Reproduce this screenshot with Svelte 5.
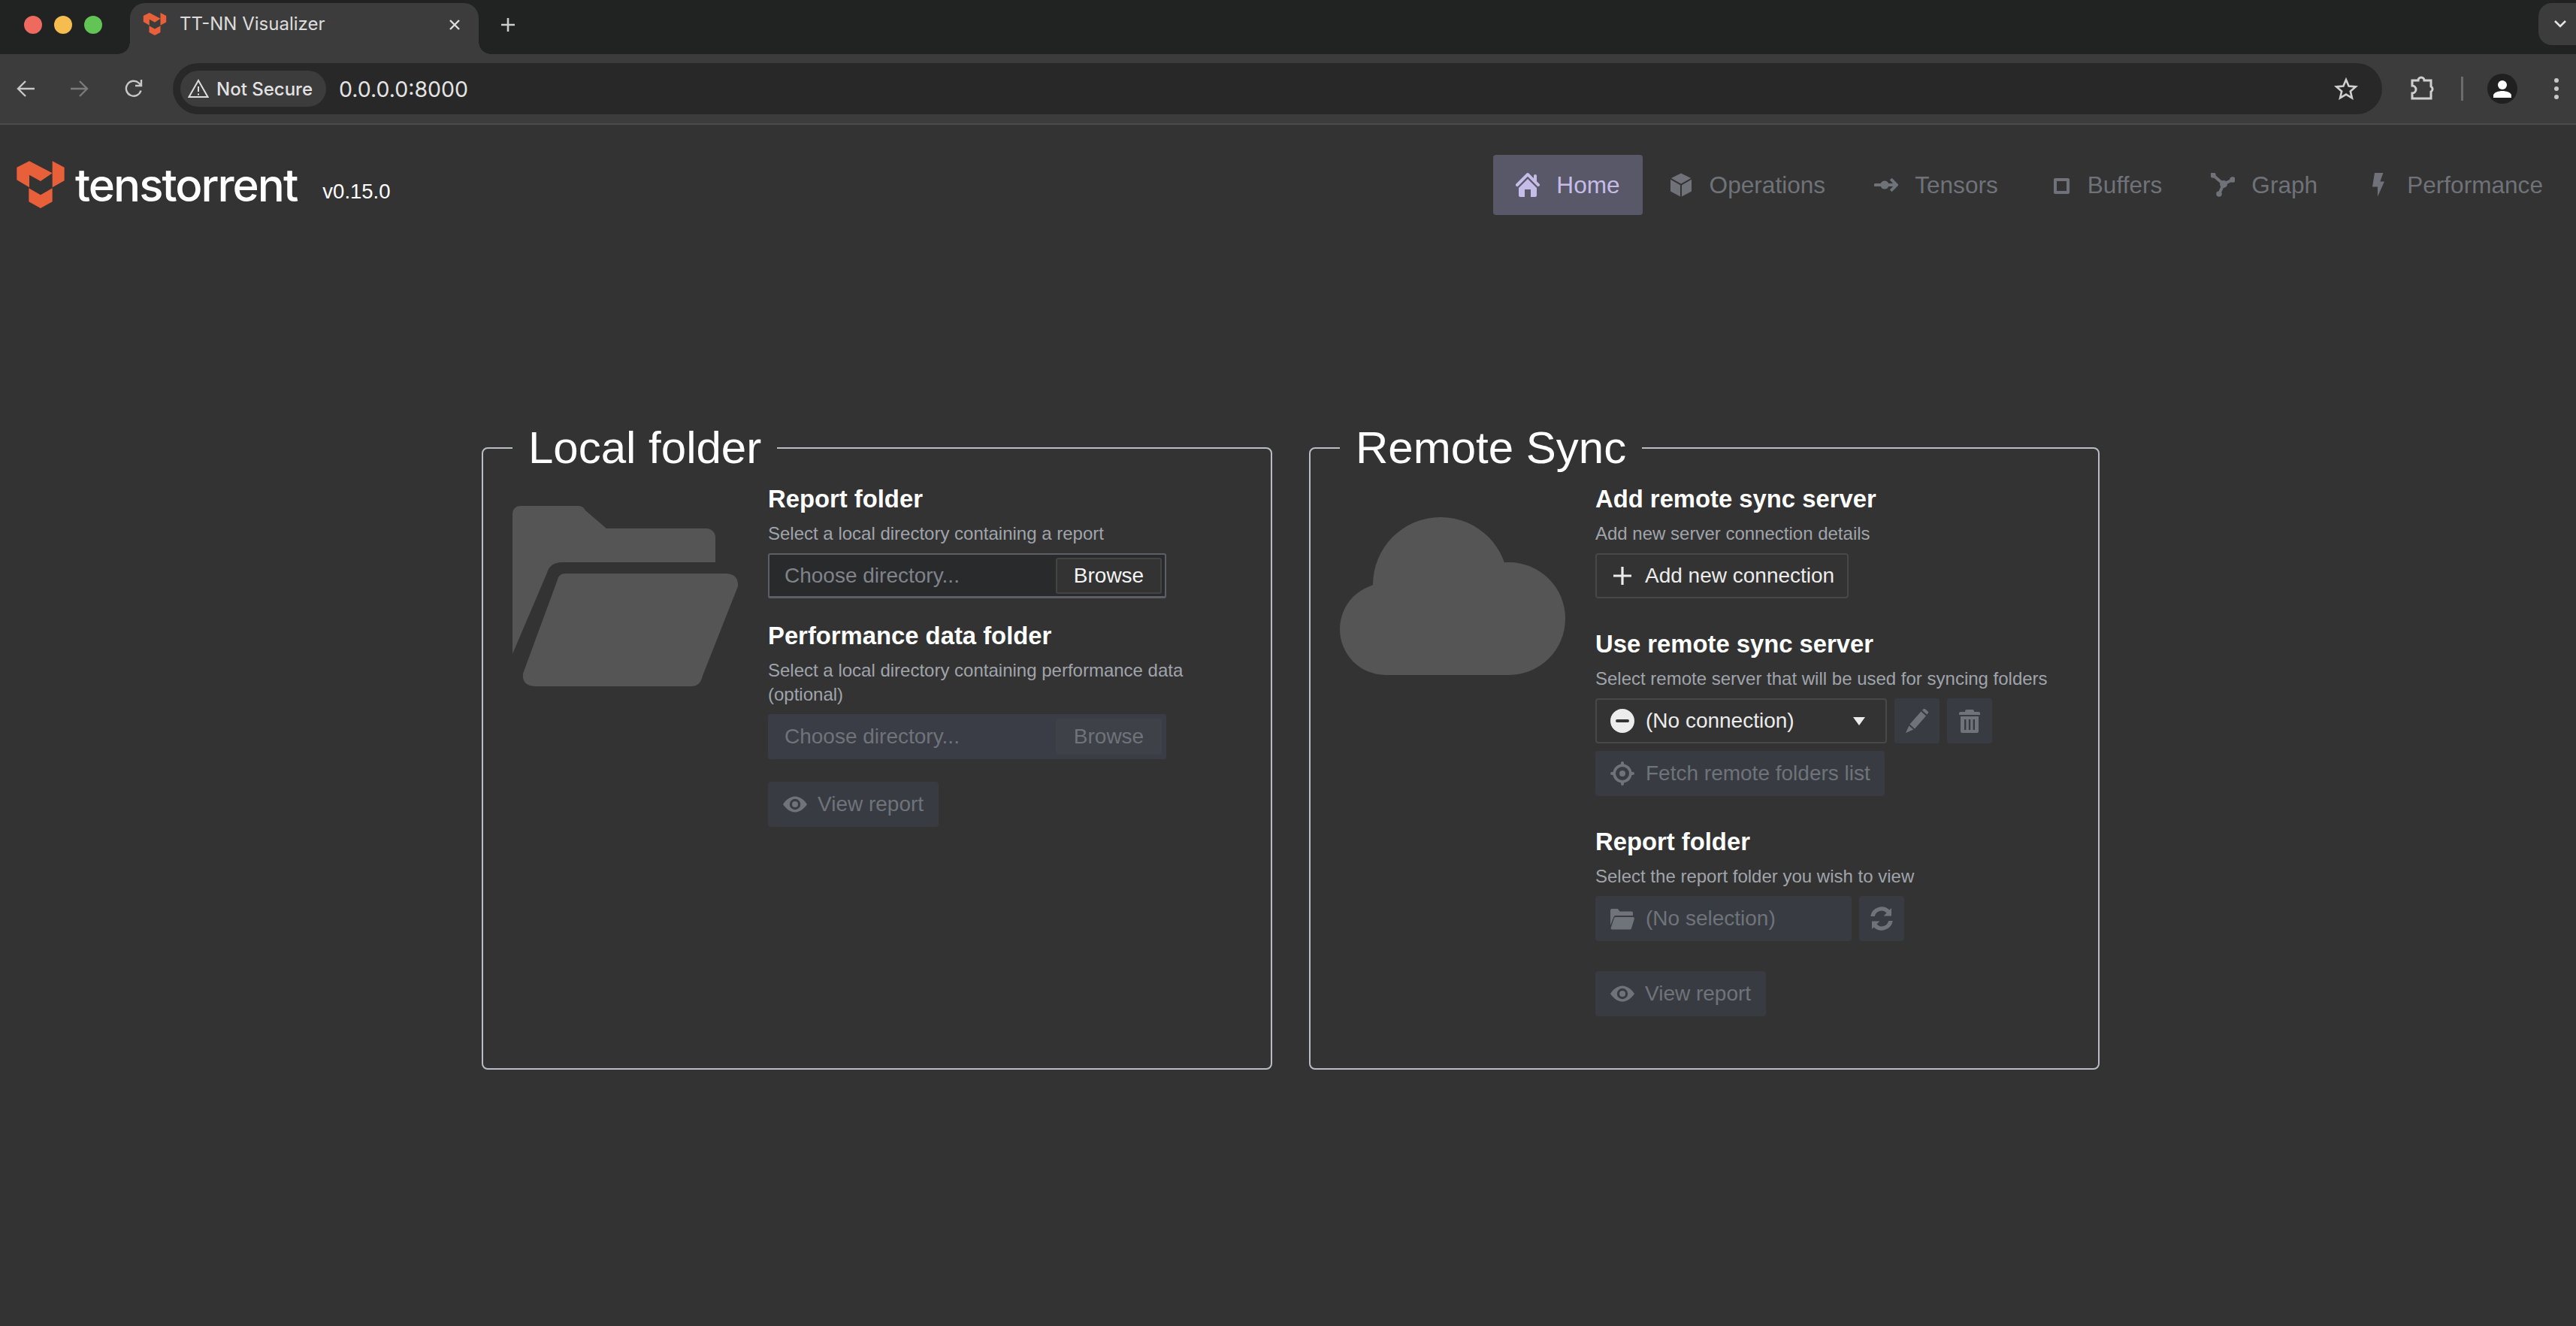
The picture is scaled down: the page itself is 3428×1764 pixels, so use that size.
<script lang="ts">
	const NAV = [
		{
			label: 'Home',
			active: true,
			d: 'M2 10v5c0 .55.45 1 1 1h3v-5h4v5h3c.55 0 1-.45 1-1v-5L8 4l-6 6zm13.71-2.71L14 5.59V2c0-.55-.45-1-1-1s-1 .45-1 1v1.59L8.71.29C8.53.11 8.28 0 8 0s-.53.11-.71.29l-7 7a1.003 1.003 0 001.42 1.42L8 2.41l6.29 6.29c.18.19.43.3.71.3a1.003 1.003 0 00.71-1.71z'
		},
		{
			label: 'Operations',
			d: 'M14.6 3.5 8 .2 1.4 3.5 8 7.2l6.6-3.7zM1 4.4v7.9l6.5 3.5V8.1L1 4.4zm7.500 3.700v7.700l6.500-3.500V4.400L8.500 8.100z'
		},
		{
			label: 'Tensors',
			d: 'M.8 7h3.6a2.8 2.8 0 0 1 5.2 0h3l-2.2-2.2 1.4-1.4L16.4 8l-4.6 4.6-1.4-1.4L12.6 9h-3a2.8 2.8 0 0 1-5.2 0H.8a1 1 0 0 1 0-2z'
		},
		{ label: 'Buffers', d: 'M5.500 3.500h8.500a1 1 0 0 1 1 1V13a1 1 0 0 1-1 1H5.500a1 1 0 0 1-1-1V4.500a1 1 0 0 1 1-1zm1 2v6.500h6.500V5.500z' },
		{
			label: 'Graph',
			line: true,
			d: 'M1.5 1.5L8.5 7.5M8.5 7.5L14.5 4.5M8.5 7.5L5.5 14M0.6 1.5a.9.9 0 1 0 1.8 0a.9.9 0 1 0-1.8 0M7 7.5a1.5 1.5 0 1 0 3 0a1.5 1.5 0 1 0-3 0M13.6 4.5a.9.9 0 1 0 1.8 0a.9.9 0 1 0-1.8 0M4.6 14a.9.9 0 1 0 1.8 0a.9.9 0 1 0-1.8 0'
		},
		{ label: 'Performance', d: 'M5.5 0h5.7L9.2 5.8H12L7.5 15.8V9.2H4z' }
	];

	const EYE =
		'M8 2.8C4.6 2.8 1.7 5.4 0 8c1.7 2.6 4.6 5.2 8 5.2s6.3-2.6 8-5.2c-1.7-2.6-4.6-5.2-8-5.2zm0 1.6a3.6 3.6 0 1 1 0 7.2 3.6 3.6 0 0 1 0-7.2zM8 6a2 2 0 1 0 0 4 2 2 0 0 0 0-4z';
</script>

{#snippet mark(size, box)}
	<svg class="mark" width={size} height={size} viewBox={box} aria-hidden="true">
		<path d="M25 50 75 25l92 48-47 32-45-25v50l-50-30z" />
		<path d="M167 25l48 25v53l-48 27z" />
		<path d="M73 133l47 27 47-27v54l-47 26-47-26z" />
	</svg>
{/snippet}

{#snippet viewReport()}
	<button class="btn off view" disabled>
		<svg class="ico" viewBox="0 0 16 16"><path fill-rule="evenodd" d={EYE} /></svg>
		View report
	</button>
{/snippet}

{#snippet fileInput(off)}
	<label class="file" class:off>
		<span class="placeholder">Choose directory...</span>
		<span class="browse">Browse</span>
	</label>
{/snippet}

<div class="tabstrip">
	<div class="lights">
		<i class="red"></i><i class="amber"></i><i class="green"></i>
	</div>
	<div class="tab">
		{@render mark(32, '20 20 200 198')}
		<span class="tab-title">TT-NN Visualizer</span>
		<svg class="tab-x" viewBox="0 0 16 16"><path d="M2 2l12 12M14 2 2 14" /></svg>
	</div>
	<svg class="new-tab" viewBox="0 0 20 20"><path d="M10 1v18M1 10h18" /></svg>
	<div class="tab-menu">
		<svg viewBox="0 0 18 12"><path d="M2 2l7 7 7-7" /></svg>
	</div>
</div>

<div class="toolbar">
	<svg class="tool" viewBox="0 0 24 24"><path d="M24 12H2M12 2 2 12l10 10" /></svg>
	<svg class="tool dim" viewBox="0 0 24 24"><path d="M0 12h22M12 2l10 10-10 10" /></svg>
	<svg class="tool" viewBox="0 0 24 24"><path d="M21.500 14.500A10 10 0 1 1 18.800 4.500L21.500 7M22 0v8h-8" /></svg>
	<div class="omnibox">
		<div class="pill">
			<svg class="warn" viewBox="0 0 28 26"><path d="M14 2 26.5 24h-25z" /><path d="M14 10v7M14 19.5v2" /></svg>
			Not Secure
		</div>
		<span class="url">0.0.0.0:8000</span>
		<svg class="star" viewBox="0 0 32 32"><path d="M16 4l3.6 8.6 9.2.8-7 6 2.1 9L16 23.6 8.100 28.400l2.100-9-7-6 9.200-.8z" /></svg>
	</div>
	<svg class="puzzle" viewBox="0 0 34 34"><path d="M4 6h8a4 4 0 0 1 8 0h9v8a4 4 0 0 1 0 7v9H4v-7a5 5 0 0 0 0-10z" /></svg>
	<span class="sep"></span>
	<svg class="avatar" viewBox="0 0 40 40">
		<circle cx="20" cy="20" r="20" fill="#202020" />
		<circle cx="20" cy="15" r="6" fill="#fff" />
		<path d="M8 32v-3c0-4 7-6 12-6s12 2 12 6v3z" fill="#fff" />
	</svg>
	<div class="dots"><i></i><i></i><i></i></div>
</div>

<header class="app-header">
	<div class="brand">
		{@render mark(80, '0 0 240 240')}
		<span class="wordmark">tenstorrent</span>
		<span class="version">v0.15.0</span>
	</div>
	<nav>
		{#each NAV as item}
			<a href="#top" class="nav-item" class:active={item.active}>
				<svg class="ico" class:line={item.line} viewBox="0 0 16 16"><path fill-rule="evenodd" d={item.d} /></svg>
				{item.label}
			</a>
		{/each}
	</nav>
</header>

<main>
	<fieldset>
		<legend>Local folder</legend>
		<div class="panel">
			<svg class="hero folder" viewBox="0 0 300 240" aria-hidden="true">
				<path d="M0 10A10 10 0 0 1 10 0H88q6 0 9 6L125 30H258a12 12 0 0 1 12 12V75H66q-16 0-20 14L0 197z" />
				<path d="M70 90H285q16 1 15 17L253 226q-3 14-15 14H32q-20 0-18-17L60 98q2-8 10-8z" />
			</svg>
			<div class="col">
				<h4>Report folder</h4>
				<p>Select a local directory containing a report</p>
				{@render fileInput(false)}

				<h4 class="next">Performance data folder</h4>
				<p>Select a local directory containing performance data (optional)</p>
				{@render fileInput(true)}

				<div class="action">{@render viewReport()}</div>
			</div>
		</div>
	</fieldset>

	<fieldset>
		<legend>Remote Sync</legend>
		<div class="panel">
			<svg class="hero cloud" viewBox="0 0 300 210" aria-hidden="true">
				<circle cx="134" cy="90" r="90" />
				<circle cx="225" cy="135" r="75" />
				<circle cx="61" cy="149" r="61" />
				<rect x="61" y="120" width="164" height="90" />
			</svg>
			<div class="col">
				<h4>Add remote sync server</h4>
				<p>Add new server connection details</p>
				<button class="btn outline add">
					<svg class="ico" viewBox="0 0 16 16"><path d="M7.200 2h1.600v5.200H14v1.600H8.800V14H7.200V8.800H2V7.200h5.200z" /></svg>
					Add new connection
				</button>

				<h4 class="gap">Use remote sync server</h4>
				<p>Select remote server that will be used for syncing folders</p>
				<div class="row">
					<button class="btn outline select">
						<svg class="ico" viewBox="0 0 16 16"><path fill-rule="evenodd" d="M8 0a8 8 0 1 1 0 16A8 8 0 0 1 8 0zM4.500 7a1 1 0 0 0 0 2h7a1 1 0 0 0 0-2z" /></svg>
						(No connection)
						<span class="caret"></span>
					</button>
					<button class="btn off square" disabled aria-label="Edit">
						<svg class="ico" viewBox="0 0 16 16"><path d="M3.200 10.300 10.700 1.800l3.300 2.900-7.500 8.500zM11.500 1l.7-.7a1 1 0 0 1 1.400-.1l1.600 1.400a1 1 0 0 1 .1 1.400l-.7.800zM2.700 11.200l3 2.600L.5 16z" /></svg>
					</button>
					<button class="btn off square" disabled aria-label="Delete">
						<svg class="ico" viewBox="0 0 16 16"><path fill-rule="evenodd" d="M6 .5h4a1 1 0 0 1 1 1V2h3a1 1 0 0 1 1 1v1H1V3a1 1 0 0 1 1-1h3v-.5a1 1 0 0 1 1-1zM2 5h12v10a1 1 0 0 1-1 1H3a1 1 0 0 1-1-1zm2.500 2v7h1.200V7zm2.900 0v7h1.200V7zm2.900 0v7h1.200V7z" /></svg>
					</button>
				</div>
				<div class="row below">
					<button class="btn off fetch" disabled>
						<svg class="ico" viewBox="0 0 16 16"><path fill-rule="evenodd" d="M8 0a1 1 0 0 1 1 1v.7A6.500 6.500 0 0 1 14.300 7h.7a1 1 0 0 1 0 2h-.7A6.500 6.500 0 0 1 9 14.300v.7a1 1 0 0 1-2 0v-.7A6.500 6.500 0 0 1 1.700 9H1a1 1 0 0 1 0-2h.7A6.500 6.500 0 0 1 7 1.700V1a1 1 0 0 1 1-1zm0 3.500a4.500 4.500 0 1 0 0 9 4.500 4.500 0 0 0 0-9zM8 6a2 2 0 1 1 0 4 2 2 0 0 1 0-4z" /></svg>
						Fetch remote folders list
					</button>
				</div>

				<h4 class="gap">Report folder</h4>
				<p>Select the report folder you wish to view</p>
				<div class="row">
					<button class="btn off report-select" disabled>
						<svg class="ico" viewBox="0 0 16 16"><path d="M0 2.500a1 1 0 0 1 1-1h4l1.200 1.700H14a1 1 0 0 1 1 1V6H3.500q-1 0-1.300 1L0 12.500z" /><path d="M3.300 7H15q1 0 1 1l-2 6.500q-.2.800-1 .8H1.200q-1 0-.9-1L2.500 7.700Q2.700 7 3.300 7z" /></svg>
						(No selection)
					</button>
					<button class="btn off square" disabled aria-label="Refresh">
						<svg class="ico" viewBox="0 0 16 16"><path d="M14.500 1v5.200H9.300l2-2A4.700 4.700 0 0 0 3.400 6.500H.6a7.500 7.500 0 0 1 12.600-4.200zM1.500 15V9.800h5.200l-2 2a4.700 4.700 0 0 0 7.900-2.300h2.800a7.500 7.500 0 0 1-12.600 4.200z" /></svg>
					</button>
				</div>

				<div class="action">{@render viewReport()}</div>
			</div>
		</div>
	</fieldset>
</main>

<style>
	:global(body) {
		margin: 0;
		background: #333;
		font-family: 'Liberation Sans', Arial, sans-serif;
		color: #fff;
		min-height: 100vh;
	}

	/* browser chrome */
	.tabstrip {
		height: 72px;
		box-sizing: border-box;
		background: #202322;
		display: flex;
		align-items: flex-start;
		position: relative;
	}

	.lights {
		display: flex;
		gap: 16px;
		padding: 21px 0 0 32px;
		width: 173px;
		box-sizing: border-box;
	}

	.lights i {
		width: 24px;
		height: 24px;
		border-radius: 50%;
	}

	.red {
		background: #ee6a5f;
	}

	.amber {
		background: #f5bd4f;
	}

	.green {
		background: #61c454;
	}

	.tab {
		position: relative;
		margin-top: 4px;
		width: 464px;
		height: 68px;
		box-sizing: border-box;
		background: #3c3c3c;
		border-radius: 20px 20px 0 0;
		display: flex;
		align-items: flex-start;
		padding: 12px 24px 0 17px;
		gap: 17px;
	}

	.tab::before,
	.tab::after {
		content: '';
		position: absolute;
		bottom: 0;
		width: 16px;
		height: 16px;
		background: radial-gradient(circle at 0 0, #202322 15.5px, #3c3c3c 16px);
	}

	.tab::before {
		left: -16px;
	}

	.tab::after {
		right: -16px;
		background: radial-gradient(circle at 100% 0, #202322 15.5px, #3c3c3c 16px);
	}

	.mark {
		display: block;
		flex: none;
		fill: #e8603a;
	}

	.tab-title {
		font: 24px/32px Inter, sans-serif;
		color: #dcdcdc;
		flex: 1;
	}

	.tab-x {
		width: 16px;
		height: 16px;
		margin-top: 9px;
		fill: none;
		stroke: #ddd;
		stroke-width: 2.4;
	}

	.new-tab {
		width: 20px;
		height: 20px;
		margin: 23px 0 0 29px;
		fill: none;
		stroke: #ccc;
		stroke-width: 2.6;
	}

	.tab-menu {
		margin: 4px 0 0 auto;
		width: 50px;
		height: 56px;
		background: #3c3c3c;
		border-radius: 18px 0 0 18px;
		display: flex;
		align-items: center;
		padding-left: 20px;
		box-sizing: border-box;
	}

	.tab-menu svg {
		width: 18px;
		height: 12px;
		fill: none;
		stroke: #e4e4e4;
		stroke-width: 2.6;
	}

	.toolbar {
		height: 94px;
		box-sizing: border-box;
		background: #3c3c3c;
		border-bottom: 2px solid #4b4b4b;
		display: flex;
		align-items: center;
		padding: 0 14px 0 22px;
		position: relative;
	}

	.tool {
		width: 24px;
		height: 24px;
		margin-right: 48px;
		fill: none;
		stroke: #c7c7c7;
		stroke-width: 2.4;
	}

	.tool.dim {
		stroke: #7b7b7b;
	}

	.tool:nth-of-type(3) {
		margin-right: 40px;
	}

	.omnibox {
		width: 2940px;
		height: 68px;
		border-radius: 34px;
		background: #282828;
		display: flex;
		align-items: center;
		padding: 0 32px 0 10px;
		box-sizing: border-box;
	}

	.pill {
		height: 48px;
		padding: 0 18px 0 10px;
		border-radius: 24px;
		background: #3c3c3c;
		display: flex;
		align-items: center;
		gap: 10px;
		font: 500 24px Inter, sans-serif;
		color: #e2e2e2;
	}

	.warn {
		width: 28px;
		height: 26px;
		fill: none;
		stroke: #ddd;
		stroke-width: 2;
	}

	.url {
		margin-left: 17px;
		font: 28.5px Inter, sans-serif;
		color: #e4e4e4;
		flex: 1;
	}

	.star {
		width: 32px;
		height: 32px;
		fill: none;
		stroke: #cfcfcf;
		stroke-width: 2.6;
	}

	.puzzle {
		width: 34px;
		height: 34px;
		margin-left: 36px;
		fill: none;
		stroke: #cfcfcf;
		stroke-width: 3;
	}

	.sep {
		width: 3px;
		height: 32px;
		margin: 0 32px 0 35px;
		background: #6c6c6c;
	}

	.avatar {
		width: 40px;
		height: 40px;
		display: block;
		flex: none;
	}

	.dots {
		display: flex;
		flex-direction: column;
		gap: 5px;
		margin-left: 49px;
	}

	.dots i {
		width: 6px;
		height: 6px;
		border-radius: 50%;
		background: #c8c8c8;
	}

	/* app header */
	.app-header {
		display: flex;
		justify-content: space-between;
		padding: 40px 14px 0 14px;
	}

	.brand {
		display: flex;
		align-items: center;
	}

	.wordmark {
		font: 500 60px/80px Inter, sans-serif;
		letter-spacing: -2px;
		margin-left: 6px;
		color: #fff;
	}

	.version {
		font-size: 27.5px;
		margin: 18px 0 0 34px;
	}

	nav {
		display: flex;
		gap: 5px;
	}

	.nav-item {
		height: 80px;
		box-sizing: border-box;
		display: flex;
		align-items: center;
		gap: 22px;
		padding: 0 30px;
		border-radius: 4px;
		font-size: 31.6px;
		color: #6f7278;
		text-decoration: none;
	}

	.nav-item.active {
		background: #585868;
		color: #c5bde8;
	}

	.ico {
		display: block;
		flex: none;
		width: 32px;
		height: 32px;
		fill: currentColor;
	}

	.ico.line {
		stroke: currentColor;
		stroke-width: 2;
	}

	/* panels */
	main {
		display: flex;
		justify-content: center;
		gap: 49px;
		padding-left: 7px;
		margin-top: 274px;
	}

	fieldset {
		box-sizing: border-box;
		width: 1052px;
		height: 863px;
		margin: 0;
		padding: 0;
		border: 2px solid #b9bdc3;
		border-radius: 8px;
	}

	legend {
		margin-left: 39px;
		padding: 0 21px;
		font-size: 60px;
		line-height: 72px;
		color: #fff;
	}

	.panel {
		display: flex;
		gap: 40px;
		padding: 12px 0 0 39px;
	}

	.hero {
		flex: none;
		display: block;
		width: 300px;
		fill: #555;
	}

	.folder {
		height: 240px;
		margin-top: 29px;
	}

	.cloud {
		height: 210px;
		margin-top: 44px;
	}

	.col {
		flex: none;
		width: 640px;
	}

	h4 {
		margin: 0 0 10px;
		font-size: 32.8px;
		line-height: 40px;
		font-weight: 700;
	}

	h4.next {
		margin-top: 30px;
	}

	h4.gap {
		margin-top: 41px;
	}

	p {
		margin: 0 0 10px;
		font-size: 24px;
		line-height: 32px;
		color: #a0a4ab;
	}

	.file {
		width: 530px;
		height: 60px;
		box-sizing: border-box;
		background: #292a2c;
		border: 2px solid #5c5f63;
		border-bottom-width: 3px;
		border-radius: 3px;
		display: flex;
		align-items: center;
		justify-content: space-between;
		padding: 0 4px 0 20px;
		font-size: 28px;
	}

	.placeholder {
		color: #7f838a;
	}

	.browse {
		width: 141px;
		height: 48px;
		box-sizing: border-box;
		border: 2px solid #444;
		border-radius: 3px;
		background: #333;
		display: flex;
		align-items: center;
		justify-content: center;
		color: #f4f4f4;
	}

	.file.off {
		background: #3a3d45;
		border-color: #3a3d45;
	}

	.file.off .placeholder,
	.file.off .browse {
		color: #6f737a;
	}

	.file.off .browse {
		background: #3e4148;
		border-color: #3e4148;
	}

	.action {
		margin-top: 30px;
	}

	.col:has(.add) .action {
		margin-top: 40px;
	}

	.btn {
		height: 60px;
		box-sizing: border-box;
		display: inline-flex;
		align-items: center;
		gap: 15px;
		padding: 0 20px;
		border-radius: 4px;
		border: 0;
		font: 28px 'Liberation Sans', Arial, sans-serif;
		white-space: nowrap;
	}

	.btn.off {
		background: #383c42;
		color: #6f737a;
	}

	.btn.outline {
		background: #333;
		border: 2px solid #484848;
		color: #ececec;
		padding: 0 18px;
	}

	.add {
		width: 337px;
		gap: 14px;
	}

	.row {
		display: flex;
		gap: 10px;
	}

	.row.below {
		margin-top: 10px;
	}

	.select {
		width: 388px;
	}

	.caret {
		margin-left: auto;
		margin-right: 9px;
		border-left: 8px solid transparent;
		border-right: 8px solid transparent;
		border-top: 11px solid #ececec;
	}

	.square {
		width: 60px;
		padding: 0;
		justify-content: center;
	}

	.fetch {
		width: 385px;
	}

	.report-select {
		width: 341px;
	}

	.view {
		gap: 14px;
	}
</style>
